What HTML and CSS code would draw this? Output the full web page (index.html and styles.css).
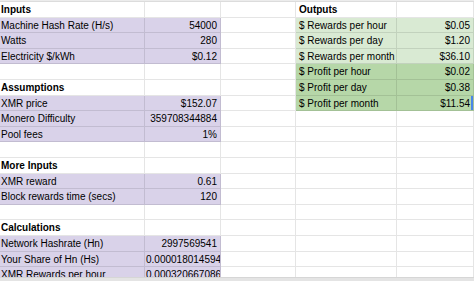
FILE: index.html
```html
<!DOCTYPE html>
<html>
<head>
<meta charset="utf-8">
<link rel="stylesheet" href="styles.css">
</head>
<body>
<div class="page">
  <div class="topbar"></div>
  <div class="sheet">
    <div class="c b">Inputs</div><div class="c"></div><div class="c"></div><div class="c b pl">Outputs</div><div class="c"></div>

    <div class="c p">Machine Hash Rate (H/s)</div><div class="c p r">54000</div><div class="c"></div><div class="c g1 pl">$ Rewards per hour</div><div class="c g1 r">$0.05</div>

    <div class="c p">Watts</div><div class="c p r">280</div><div class="c"></div><div class="c g1 pl">$ Rewards per day</div><div class="c g1 r">$1.20</div>

    <div class="c p">Electricity $/kWh</div><div class="c p r">$0.12</div><div class="c"></div><div class="c g1 pl">$ Rewards per month</div><div class="c g1 r">$36.10</div>

    <div class="c"></div><div class="c"></div><div class="c"></div><div class="c g2 pl">$ Profit per hour</div><div class="c g2 r">$0.02</div>

    <div class="c b">Assumptions</div><div class="c"></div><div class="c"></div><div class="c g2 pl">$ Profit per day</div><div class="c g2 r">$0.38</div>

    <div class="c p">XMR price</div><div class="c p r">$152.07</div><div class="c"></div><div class="c g2 pl">$ Profit per month</div><div class="c g2 r sel">$11.54</div>

    <div class="c p">Monero Difficulty</div><div class="c p r">359708344884</div><div class="c"></div><div class="c"></div><div class="c"></div>

    <div class="c p">Pool fees</div><div class="c p r">1%</div><div class="c"></div><div class="c"></div><div class="c"></div>

    <div class="c"></div><div class="c"></div><div class="c"></div><div class="c"></div><div class="c"></div>

    <div class="c b">More Inputs</div><div class="c"></div><div class="c"></div><div class="c"></div><div class="c"></div>

    <div class="c p">XMR reward</div><div class="c p r">0.61</div><div class="c"></div><div class="c"></div><div class="c"></div>

    <div class="c p">Block rewards time (secs)</div><div class="c p r">120</div><div class="c"></div><div class="c"></div><div class="c"></div>

    <div class="c"></div><div class="c"></div><div class="c"></div><div class="c"></div><div class="c"></div>

    <div class="c b">Calculations</div><div class="c"></div><div class="c"></div><div class="c"></div><div class="c"></div>

    <div class="c p">Network Hashrate (Hn)</div><div class="c p r">2997569541</div><div class="c"></div><div class="c"></div><div class="c"></div>

    <div class="c p">Your Share of Hn (Hs)</div><div class="c p clip">0.000018014594</div><div class="c"></div><div class="c"></div><div class="c"></div>

    <div class="c p">XMR Rewards per hour</div><div class="c p clip">0.000320667086</div><div class="c"></div><div class="c"></div><div class="c"></div>
  </div>
  <div class="bottombar"></div>
</div>
</body>
</html>
```

FILE: styles.css
```css
html, body {
  margin: 0;
  padding: 0;
  background: #ffffff;
}

.page {
  width: 474px;
  height: 281px;
  display: flex;
  flex-direction: column;
  overflow: hidden;
  font-family: "Liberation Sans", Arial, sans-serif;
  font-size: 10px;
  color: #000;
}

.topbar {
  height: 2px;
  flex: none;
  background: #ececec;
  border-bottom: 1px solid #dcdcdc;
  box-sizing: border-box;
}

.sheet {
  flex: 1;
  min-height: 0;
  overflow: hidden;
  display: grid;
  grid-template-columns: 145px 76px 75px 101px 77px;
  grid-auto-rows: 15.6px;
}

.c {
  box-sizing: border-box;
  border-right: 1px solid rgba(0, 0, 0, 0.1);
  border-bottom: 1px solid rgba(0, 0, 0, 0.1);
  line-height: 15.4px;
  padding: 0 3px 0 1px;
  white-space: nowrap;
  overflow: hidden;
}

.b { font-weight: bold; }
.r { text-align: right; }
.pl { padding-left: 3px; }
.clip { padding-left: 1px; text-overflow: clip; }

.p { background: #d9d2e9; }
.g1 { background: #d9ead3; }
.g2 { background: #b6d7a8; }

.sel {
  box-shadow: inset -2px 0 0 #4a86e8;
}

.bottombar {
  height: 4px;
  flex: none;
  background: #e4e4e4;
  border-top: 1px solid #d6d6d6;
  box-sizing: border-box;
}
```
